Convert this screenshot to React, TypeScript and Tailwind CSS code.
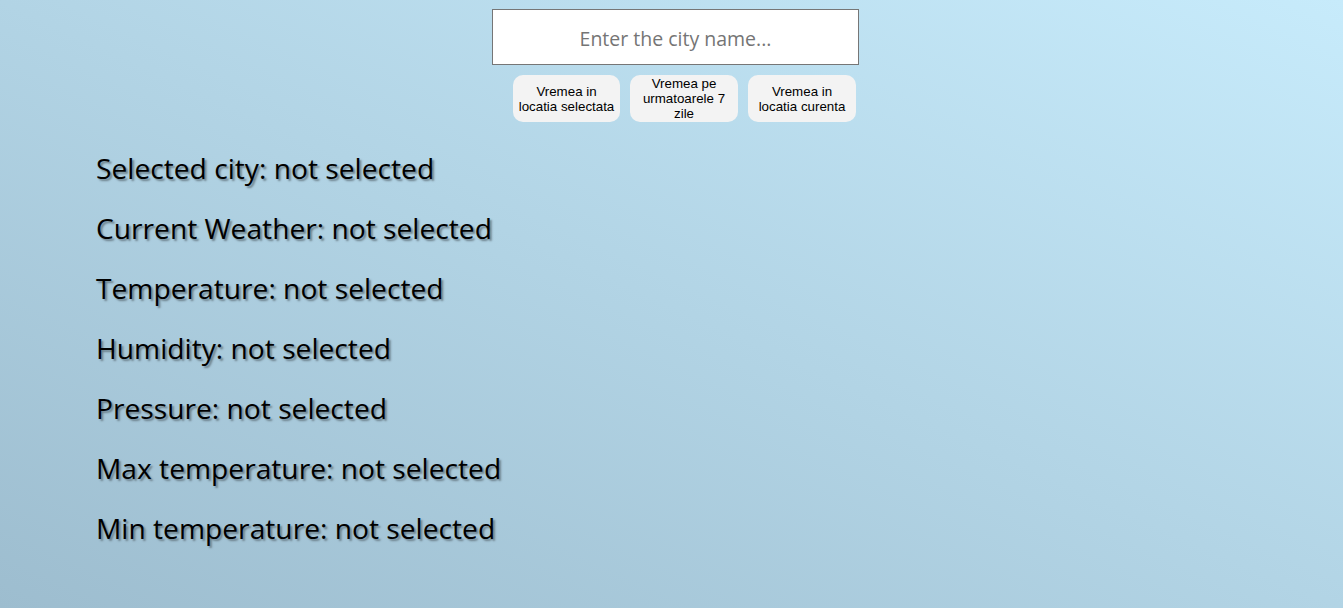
import React, { useState } from "react";

const fields = [
  "Selected city",
  "Current Weather",
  "Temperature",
  "Humidity",
  "Pressure",
  "Max temperature",
  "Min temperature",
];

export default function App() {
  const [city, setCity] = useState("");

  return (
    <main className="min-h-[608px] w-full bg-[linear-gradient(to_top_right,#9dbdcf,#c7ebfb)] font-['Segoe_UI','Open_Sans',sans-serif]">
      <div className="flex flex-col items-center pt-[9px]">
        <input
          type="text"
          value={city}
          onChange={(e) => setCity(e.target.value)}
          placeholder="Enter the city name..."
          className="ml-[8px] h-[56px] w-[367px] border border-[#767676] bg-white pt-[3px] text-center text-[19.5px] text-[#333] placeholder:text-[#757575] focus:outline-none"
        />
        <div className="ml-[26px] mt-[10px] flex gap-[10px] font-['Liberation_Sans',Arial,sans-serif] text-[13.33px] leading-[15px] text-black">
          <button className="h-[47px] w-[107px] rounded-[10px] bg-[#f3f3f3] px-1">
            Vremea in
            <br />
            locatia selectata
          </button>
          <button className="h-[47px] w-[108px] rounded-[10px] bg-[#f3f3f3] px-1">
            Vremea pe
            <br />
            urmatoarele 7
            <br />
            zile
          </button>
          <button className="h-[47px] w-[108px] rounded-[10px] bg-[#f3f3f3] px-1">
            Vremea in
            <br />
            locatia curenta
          </button>
        </div>
      </div>

      {/* weather info */}
      <div className="mt-[26px] flex flex-col gap-[20px] pl-[96px] text-[28.2px] leading-[40px] text-black [text-shadow:2px_2px_2px_#6b7f8a]">
        {fields.map((f) => (
          <p key={f}>{f}: not selected</p>
        ))}
      </div>
    </main>
  );
}
